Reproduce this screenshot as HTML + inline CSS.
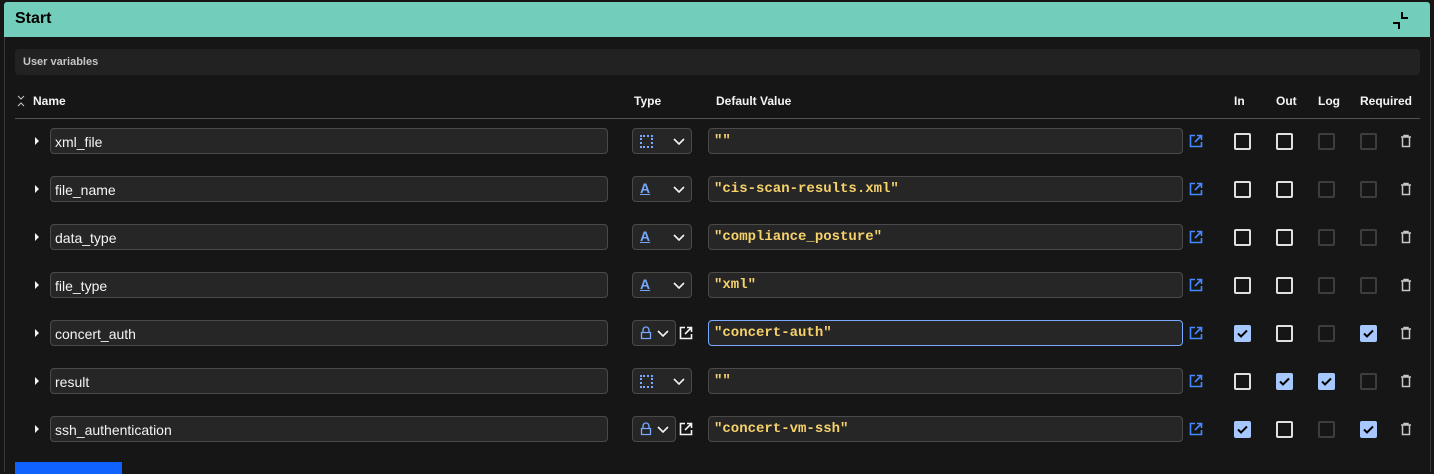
<!DOCTYPE html>
<html><head><meta charset="utf-8"><style>
*{box-sizing:border-box;margin:0;padding:0}
body{width:1434px;height:472px;background:#161616;font-family:"Liberation Sans",sans-serif;color:#f4f4f4;position:relative;overflow:hidden}
.a{position:absolute}
.hdr{left:4px;top:2px;width:1426px;height:35px;background:#72cdbb;border-radius:3px 3px 0 0}
.hdr span{position:absolute;left:11px;top:8px;font-size:16px;font-weight:bold;color:#000}
.side{top:37px;width:1px;height:435px;background:#393939}
.uv{left:15px;top:49px;width:1405px;height:26px;background:#222;border-radius:4px;font-size:11px;font-weight:bold;color:#c6c6c6;padding:7px 8px}
.th{top:94px;font-size:12px;font-weight:bold;color:#f4f4f4}
.line{left:15px;top:118px;width:1405px;height:1px;background:#525252}
.inp{height:26px;background:#262626;border:1px solid #4a4a4a;border-radius:4px}
.nm{left:50px;width:558px;font-size:14px;padding:5px 4px;color:#f4f4f4}
.dv{left:708px;width:475px;font-family:"Liberation Mono",monospace;font-size:14px;font-weight:bold;padding:4px 5px;color:#f7d26b}
.ty{left:632px;width:60px}
.tyl{left:632px;width:44px}
.cb{width:17px;height:17px;border-radius:2px}
.u{border:2px solid #e0e0e0}
.d{border:2px solid #3d3d3d}
.tri{width:0;height:0;border-top:4px solid transparent;border-bottom:4px solid transparent;border-left:4px solid #f4f4f4}
.ds{left:7px;top:6px;width:13px;height:13px;border:2px dotted #78a9ff}
.aa{left:7px;top:3px;font-size:14px;color:#78a9ff;text-decoration:underline;font-weight:bold}
</style></head><body>
<div class="a hdr"><span>Start</span>
<svg class="a" style="left:1388px;top:9px" width="20" height="20" viewBox="0 0 20 20"><path d="M10 1v6h6M1 12h6v6" stroke="#000" stroke-width="2" fill="none"/></svg></div>
<div class="a side" style="left:4px"></div><div class="a side" style="left:1430px"></div>
<div class="a uv">User variables</div>
<svg class="a" style="left:16px;top:94px" width="10" height="14" viewBox="0 0 10 14"><path d="M2 2l3 3 3-3M2 12l3-3 3 3" stroke="#c6c6c6" stroke-width="1" fill="none"/></svg>
<div class="a th" style="left:33px">Name</div>
<div class="a th" style="left:634px">Type</div>
<div class="a th" style="left:716px">Default Value</div>
<div class="a th" style="left:1234px">In</div>
<div class="a th" style="left:1276px">Out</div>
<div class="a th" style="left:1318px">Log</div>
<div class="a th" style="left:1360px">Required</div>
<div class="a line"></div>
<div class="a" style="left:15px;top:462px;width:107px;height:12px;background:#0f62fe"></div>

<div class="a" style="top:128px;left:0;width:1434px;height:26px">
<div class="a tri" style="left:35px;top:9px"></div>
<div class="a inp nm">xml_file</div>
<div class="a inp ty"><div class="a ds"></div><svg class="a" style="left:40px;top:8px" width="12" height="10"><path d="M1 2l5 5 5-5" stroke="#f4f4f4" stroke-width="1.6" fill="none"/></svg></div>
<div class="a inp dv">""</div>
<svg class="a" style="left:1189px;top:6px" width="14" height="14" viewBox="0 0 14 14"><path d="M6 1.5H1.5v11h11V8M8 1.5h4.5V6M12.5 1.5L6 8" stroke="#4589ff" stroke-width="1.6" fill="none"/></svg>
<div class="a cb u" style="left:1234px;top:5px"></div><div class="a cb u" style="left:1276px;top:5px"></div><div class="a cb d" style="left:1318px;top:5px"></div><div class="a cb d" style="left:1360px;top:5px"></div>
<svg class="a" style="left:1400px;top:6px" width="12" height="14" viewBox="0 0 12 14"><path d="M1 3h10M4 3V1.5h4V3M2.5 3.5v9h7v-9" stroke="#c6c6c6" stroke-width="1.5" fill="none"/></svg>
</div>

<div class="a" style="top:176px;left:0;width:1434px;height:26px">
<div class="a tri" style="left:35px;top:9px"></div>
<div class="a inp nm">file_name</div>
<div class="a inp ty"><div class="a aa">A</div><svg class="a" style="left:40px;top:8px" width="12" height="10"><path d="M1 2l5 5 5-5" stroke="#f4f4f4" stroke-width="1.6" fill="none"/></svg></div>
<div class="a inp dv">"cis-scan-results.xml"</div>
<svg class="a" style="left:1189px;top:6px" width="14" height="14" viewBox="0 0 14 14"><path d="M6 1.5H1.5v11h11V8M8 1.5h4.5V6M12.5 1.5L6 8" stroke="#4589ff" stroke-width="1.6" fill="none"/></svg>
<div class="a cb u" style="left:1234px;top:5px"></div><div class="a cb u" style="left:1276px;top:5px"></div><div class="a cb d" style="left:1318px;top:5px"></div><div class="a cb d" style="left:1360px;top:5px"></div>
<svg class="a" style="left:1400px;top:6px" width="12" height="14" viewBox="0 0 12 14"><path d="M1 3h10M4 3V1.5h4V3M2.5 3.5v9h7v-9" stroke="#c6c6c6" stroke-width="1.5" fill="none"/></svg>
</div>

<div class="a" style="top:224px;left:0;width:1434px;height:26px">
<div class="a tri" style="left:35px;top:9px"></div>
<div class="a inp nm">data_type</div>
<div class="a inp ty"><div class="a aa">A</div><svg class="a" style="left:40px;top:8px" width="12" height="10"><path d="M1 2l5 5 5-5" stroke="#f4f4f4" stroke-width="1.6" fill="none"/></svg></div>
<div class="a inp dv">"compliance_posture"</div>
<svg class="a" style="left:1189px;top:6px" width="14" height="14" viewBox="0 0 14 14"><path d="M6 1.5H1.5v11h11V8M8 1.5h4.5V6M12.5 1.5L6 8" stroke="#4589ff" stroke-width="1.6" fill="none"/></svg>
<div class="a cb u" style="left:1234px;top:5px"></div><div class="a cb u" style="left:1276px;top:5px"></div><div class="a cb d" style="left:1318px;top:5px"></div><div class="a cb d" style="left:1360px;top:5px"></div>
<svg class="a" style="left:1400px;top:6px" width="12" height="14" viewBox="0 0 12 14"><path d="M1 3h10M4 3V1.5h4V3M2.5 3.5v9h7v-9" stroke="#c6c6c6" stroke-width="1.5" fill="none"/></svg>
</div>

<div class="a" style="top:272px;left:0;width:1434px;height:26px">
<div class="a tri" style="left:35px;top:9px"></div>
<div class="a inp nm">file_type</div>
<div class="a inp ty"><div class="a aa">A</div><svg class="a" style="left:40px;top:8px" width="12" height="10"><path d="M1 2l5 5 5-5" stroke="#f4f4f4" stroke-width="1.6" fill="none"/></svg></div>
<div class="a inp dv">"xml"</div>
<svg class="a" style="left:1189px;top:6px" width="14" height="14" viewBox="0 0 14 14"><path d="M6 1.5H1.5v11h11V8M8 1.5h4.5V6M12.5 1.5L6 8" stroke="#4589ff" stroke-width="1.6" fill="none"/></svg>
<div class="a cb u" style="left:1234px;top:5px"></div><div class="a cb u" style="left:1276px;top:5px"></div><div class="a cb d" style="left:1318px;top:5px"></div><div class="a cb d" style="left:1360px;top:5px"></div>
<svg class="a" style="left:1400px;top:6px" width="12" height="14" viewBox="0 0 12 14"><path d="M1 3h10M4 3V1.5h4V3M2.5 3.5v9h7v-9" stroke="#c6c6c6" stroke-width="1.5" fill="none"/></svg>
</div>

<div class="a" style="top:320px;left:0;width:1434px;height:26px">
<div class="a tri" style="left:35px;top:9px"></div>
<div class="a inp nm">concert_auth</div>
<div class="a inp tyl"><svg class="a" style="left:7px;top:5px" width="12" height="14" viewBox="0 0 12 14"><path d="M3 6V4a3 3 0 0 1 6 0v2M1.5 6.5h9v6h-9z" stroke="#78a9ff" stroke-width="1.3" fill="none"/></svg><svg class="a" style="left:24px;top:8px" width="12" height="10"><path d="M1 2l5 5 5-5" stroke="#f4f4f4" stroke-width="1.6" fill="none"/></svg></div>
<svg class="a" style="left:679px;top:6px" width="14" height="14" viewBox="0 0 14 14"><path d="M6 1.5H1.5v11h11V8M8 1.5h4.5V6M12.5 1.5L6 8" stroke="#f4f4f4" stroke-width="1.6" fill="none"/></svg>
<div class="a inp dv" style="border-color:#78a9ff">"concert-auth"</div>
<svg class="a" style="left:1189px;top:6px" width="14" height="14" viewBox="0 0 14 14"><path d="M6 1.5H1.5v11h11V8M8 1.5h4.5V6M12.5 1.5L6 8" stroke="#4589ff" stroke-width="1.6" fill="none"/></svg>
<svg class="a" style="left:1234px;top:5px" width="17" height="17"><rect width="17" height="17" rx="2" fill="#a6c8ff"/><path d="M4 8.5l3 3 6-6" stroke="#000" stroke-width="2" fill="none"/></svg><div class="a cb u" style="left:1276px;top:5px"></div><div class="a cb d" style="left:1318px;top:5px"></div><svg class="a" style="left:1360px;top:5px" width="17" height="17"><rect width="17" height="17" rx="2" fill="#a6c8ff"/><path d="M4 8.5l3 3 6-6" stroke="#000" stroke-width="2" fill="none"/></svg>
<svg class="a" style="left:1400px;top:6px" width="12" height="14" viewBox="0 0 12 14"><path d="M1 3h10M4 3V1.5h4V3M2.5 3.5v9h7v-9" stroke="#c6c6c6" stroke-width="1.5" fill="none"/></svg>
</div>

<div class="a" style="top:368px;left:0;width:1434px;height:26px">
<div class="a tri" style="left:35px;top:9px"></div>
<div class="a inp nm">result</div>
<div class="a inp ty"><div class="a ds"></div><svg class="a" style="left:40px;top:8px" width="12" height="10"><path d="M1 2l5 5 5-5" stroke="#f4f4f4" stroke-width="1.6" fill="none"/></svg></div>
<div class="a inp dv">""</div>
<svg class="a" style="left:1189px;top:6px" width="14" height="14" viewBox="0 0 14 14"><path d="M6 1.5H1.5v11h11V8M8 1.5h4.5V6M12.5 1.5L6 8" stroke="#4589ff" stroke-width="1.6" fill="none"/></svg>
<div class="a cb u" style="left:1234px;top:5px"></div><svg class="a" style="left:1276px;top:5px" width="17" height="17"><rect width="17" height="17" rx="2" fill="#a6c8ff"/><path d="M4 8.5l3 3 6-6" stroke="#000" stroke-width="2" fill="none"/></svg><svg class="a" style="left:1318px;top:5px" width="17" height="17"><rect width="17" height="17" rx="2" fill="#a6c8ff"/><path d="M4 8.5l3 3 6-6" stroke="#000" stroke-width="2" fill="none"/></svg><div class="a cb d" style="left:1360px;top:5px"></div>
<svg class="a" style="left:1400px;top:6px" width="12" height="14" viewBox="0 0 12 14"><path d="M1 3h10M4 3V1.5h4V3M2.5 3.5v9h7v-9" stroke="#c6c6c6" stroke-width="1.5" fill="none"/></svg>
</div>

<div class="a" style="top:416px;left:0;width:1434px;height:26px">
<div class="a tri" style="left:35px;top:9px"></div>
<div class="a inp nm">ssh_authentication</div>
<div class="a inp tyl"><svg class="a" style="left:7px;top:5px" width="12" height="14" viewBox="0 0 12 14"><path d="M3 6V4a3 3 0 0 1 6 0v2M1.5 6.5h9v6h-9z" stroke="#78a9ff" stroke-width="1.3" fill="none"/></svg><svg class="a" style="left:24px;top:8px" width="12" height="10"><path d="M1 2l5 5 5-5" stroke="#f4f4f4" stroke-width="1.6" fill="none"/></svg></div>
<svg class="a" style="left:679px;top:6px" width="14" height="14" viewBox="0 0 14 14"><path d="M6 1.5H1.5v11h11V8M8 1.5h4.5V6M12.5 1.5L6 8" stroke="#f4f4f4" stroke-width="1.6" fill="none"/></svg>
<div class="a inp dv">"concert-vm-ssh"</div>
<svg class="a" style="left:1189px;top:6px" width="14" height="14" viewBox="0 0 14 14"><path d="M6 1.5H1.5v11h11V8M8 1.5h4.5V6M12.5 1.5L6 8" stroke="#4589ff" stroke-width="1.6" fill="none"/></svg>
<svg class="a" style="left:1234px;top:5px" width="17" height="17"><rect width="17" height="17" rx="2" fill="#a6c8ff"/><path d="M4 8.5l3 3 6-6" stroke="#000" stroke-width="2" fill="none"/></svg><div class="a cb u" style="left:1276px;top:5px"></div><div class="a cb d" style="left:1318px;top:5px"></div><svg class="a" style="left:1360px;top:5px" width="17" height="17"><rect width="17" height="17" rx="2" fill="#a6c8ff"/><path d="M4 8.5l3 3 6-6" stroke="#000" stroke-width="2" fill="none"/></svg>
<svg class="a" style="left:1400px;top:6px" width="12" height="14" viewBox="0 0 12 14"><path d="M1 3h10M4 3V1.5h4V3M2.5 3.5v9h7v-9" stroke="#c6c6c6" stroke-width="1.5" fill="none"/></svg>
</div>
</body></html>
